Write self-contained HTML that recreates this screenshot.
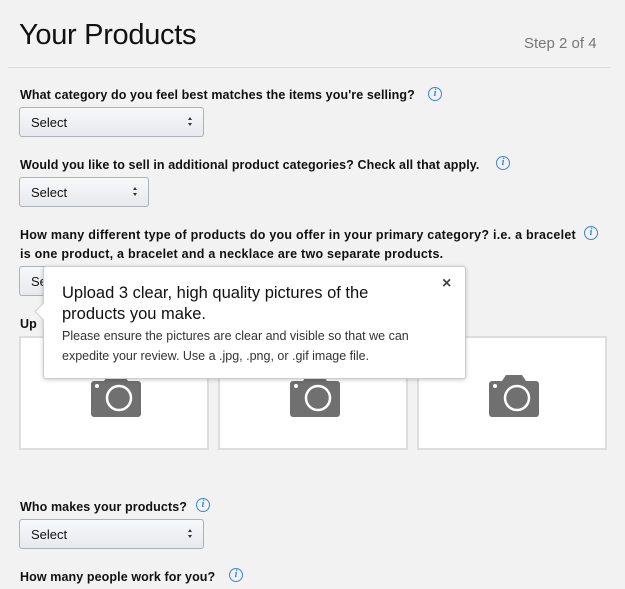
<!DOCTYPE html>
<html><head><style>
body{margin:0;width:625px;height:589px;overflow:hidden;background:#f2f2f2;font-family:"Liberation Sans",sans-serif;position:relative;color:#111}
.a{position:absolute}
h1{position:absolute;left:19px;top:19px;margin:0;font-weight:normal;font-size:29px;color:#111;letter-spacing:-0.3px}
.step{left:524px;top:35px;font-size:15px;color:#777}
.hr{left:8px;top:67px;width:602px;height:1px;background:#ddd}
.q{font-size:12.5px;font-weight:bold;color:#111;white-space:nowrap;letter-spacing:0.1px}
.sel{border:1px solid #adb1b8;border-radius:3px;background:linear-gradient(#f7f8fa,#e7e9ec);box-sizing:border-box;font-size:13px;color:#111;padding:7px 0 0 11px}
.sel:after{content:"";position:absolute;right:11px;top:9px;width:0;height:0;border:2.5px solid transparent;border-bottom:3px solid #333;border-top:0}
.sel:before{content:"";position:absolute;right:11px;top:15px;width:0;height:0;border:2.5px solid transparent;border-top:3px solid #333;border-bottom:0}
.i{width:12px;height:12px;border:1.5px solid #3a86d4;border-radius:50%;color:#3a86d4;font-size:10px;font-weight:bold;font-style:italic;text-align:center;line-height:12px;font-family:"Liberation Serif",serif}
.box{background:#fff;border:2px solid #ddd;box-sizing:border-box;width:190px;height:114px;top:336px}
.cam{position:absolute;left:69px;top:37px}
.pop{left:43px;top:266px;width:423px;height:113px;background:#fff;border:1px solid #ccc;border-radius:3px;box-shadow:0 1px 4px rgba(0,0,0,.2);box-sizing:border-box}
</style></head><body>
<h1>Your Products</h1>
<div class="a step">Step 2 of 4</div>
<div class="a hr"></div>

<div class="a q" style="left:20px;top:88px">What category do you feel best matches the items you're selling?</div>
<div class="a i" style="left:428px;top:87px">i</div>
<div class="a sel" style="left:19px;top:107px;width:185px;height:30px">Select</div>

<div class="a q" style="left:20px;top:158px">Would you like to sell in additional product categories? Check all that apply.</div>
<div class="a i" style="left:496px;top:156px">i</div>
<div class="a sel" style="left:19px;top:177px;width:130px;height:30px">Select</div>

<div class="a q" style="left:20px;top:228px;letter-spacing:0.25px">How many different type of products do you offer in your primary category? i.e. a bracelet</div>
<div class="a q" style="left:20px;top:247px;letter-spacing:0.25px">is one product, a bracelet and a necklace are two separate products.</div>
<div class="a i" style="left:584px;top:226px">i</div>
<div class="a sel" style="left:19px;top:266px;width:100px;height:30px">Se</div>
<div class="a q" style="left:20px;top:317px">Up</div>

<div class="a box" style="left:19px"><svg class="cam" width="52" height="42" viewBox="0 0 52 42"><path d="M14 6 L18 0 H34 L38 6 H48 a3 3 0 0 1 3 3 V39 a3 3 0 0 1 -3 3 H4 a3 3 0 0 1 -3 -3 V9 a3 3 0 0 1 3 -3Z" fill="#707070"/><circle cx="29" cy="23" r="12" fill="none" stroke="#fff" stroke-width="2.5"/><circle cx="7" cy="11" r="2" fill="#fff"/></svg></div>
<div class="a box" style="left:218px"><svg class="cam" width="52" height="42" viewBox="0 0 52 42"><path d="M14 6 L18 0 H34 L38 6 H48 a3 3 0 0 1 3 3 V39 a3 3 0 0 1 -3 3 H4 a3 3 0 0 1 -3 -3 V9 a3 3 0 0 1 3 -3Z" fill="#707070"/><circle cx="29" cy="23" r="12" fill="none" stroke="#fff" stroke-width="2.5"/><circle cx="7" cy="11" r="2" fill="#fff"/></svg></div>
<div class="a box" style="left:417px"><svg class="cam" width="52" height="42" viewBox="0 0 52 42"><path d="M14 6 L18 0 H34 L38 6 H48 a3 3 0 0 1 3 3 V39 a3 3 0 0 1 -3 3 H4 a3 3 0 0 1 -3 -3 V9 a3 3 0 0 1 3 -3Z" fill="#707070"/><circle cx="29" cy="23" r="12" fill="none" stroke="#fff" stroke-width="2.5"/><circle cx="7" cy="11" r="2" fill="#fff"/></svg></div>

<div class="a pop">
<div class="a" style="left:-7px;top:38px;width:12px;height:12px;background:#fff;border-left:1px solid #ccc;border-bottom:1px solid #ccc;transform:rotate(45deg)"></div>
<div class="a" style="left:18px;top:16px;font-size:16.5px;line-height:21px;color:#111;width:360px">Upload 3 clear, high quality pictures of the products you make.</div>
<div class="a" style="left:18px;top:60px;font-size:12.5px;line-height:19.5px;color:#333;width:390px">Please ensure the pictures are clear and visible so that we can expedite your review. Use a .jpg, .png, or .gif image file.</div>
<div class="a" style="left:398px;top:8px;font-size:16px;color:#444;font-weight:bold">×</div>
</div>

<div class="a q" style="left:20px;top:500px">Who makes your products?</div>
<div class="a i" style="left:196px;top:498px">i</div>
<div class="a sel" style="left:19px;top:519px;width:185px;height:30px">Select</div>

<div class="a q" style="left:20px;top:570px">How many people work for you?</div>
<div class="a i" style="left:229px;top:568px">i</div>
</body></html>
